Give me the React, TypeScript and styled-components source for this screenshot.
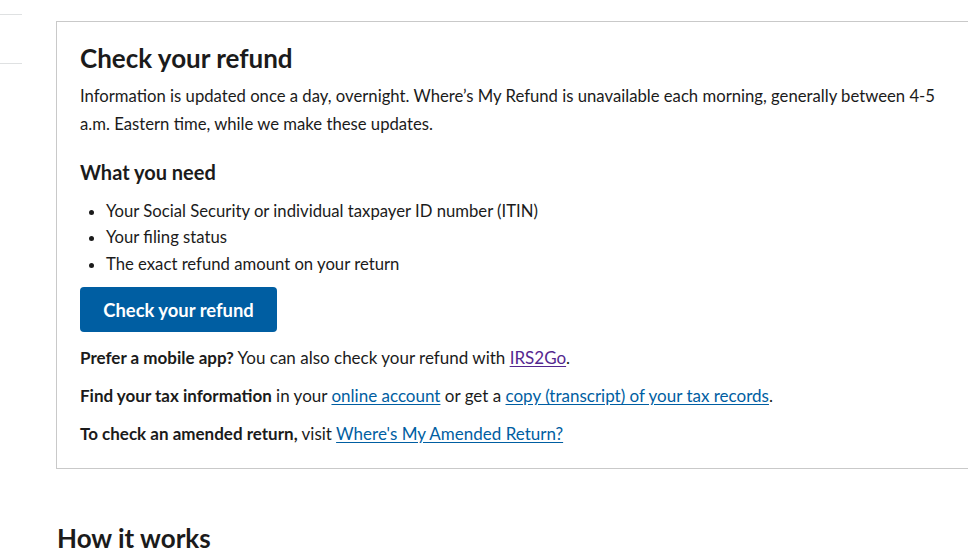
import React from "react";
import styled, { createGlobalStyle } from "styled-components";

const GlobalStyle = createGlobalStyle`
  html, body {
    margin: 0;
    padding: 0;
    background: #fff;
  }
  body {
    font-family: "Lato", "Open Sans", "Liberation Sans", sans-serif;
    color: #1b1b1b;
    overflow: hidden;
  }
`;

const Page = styled.div`
  display: flex;
  gap: 34px;
  width: 1000px;
`;

const SideNav = styled.ul`
  list-style: none;
  margin: 0;
  padding: 14px 0 0;
  width: 22px;
  flex-shrink: 0;
`;

const SideItem = styled.li`
  height: 48px;
  border-top: 1px solid #dfe1e2;
`;

const Main = styled.main`
  flex: 1;
  padding-top: 21px;
`;

const Card = styled.section`
  border: 1px solid #c9c9c9;
  padding: 20px 23px 21px;
`;

const Title = styled.h2`
  font-size: 26px;
  font-weight: 700;
  margin: 0 0 6px;
  line-height: 1.3;
`;

const Text = styled.p`
  font-size: 16.7px;
  line-height: 28px;
  margin: 0;
  max-width: 870px;
`;

const SubTitle = styled.h3`
  font-size: 20px;
  font-weight: 700;
  margin: 21px 0 13px;
  line-height: 1.3;
`;

const List = styled.ul`
  margin: 0;
  padding-left: 26px;
  font-size: 16.7px;
  line-height: 26.5px;
`;

const Button = styled.button`
  display: block;
  margin: 10px 0 13px;
  height: 45px;
  width: 197px;
  background: #005ea2;
  color: #fff;
  border: 0;
  border-radius: 4px;
  font-family: inherit;
  font-size: 18.4px;
  font-weight: 700;
  cursor: pointer;
`;

const Note = styled.p`
  font-size: 17px;
  line-height: 26px;
  margin: 0 0 12px;

  &:last-child {
    margin-bottom: 0;
  }
`;

const Link = styled.a<{ $visited?: boolean }>`
  color: ${(p) => (p.$visited ? "#54278f" : "#005ea2")};
  text-decoration: underline;
  text-underline-offset: 2px;
`;

const Heading = styled.h2`
  font-size: 26px;
  font-weight: 700;
  margin: 53px 0 0 1px;
  line-height: 1.3;
`;

export default function App() {
  return (
    <>
      <GlobalStyle />
      <Page>
        <SideNav>
          <SideItem />
          <SideItem />
        </SideNav>
        <Main>
          <Card>
            <Title>Check your refund</Title>
            <Text>
              Information is updated once a day, overnight. Where’s My Refund is
              unavailable each morning, generally between 4-5 a.m. Eastern time,
              while we make these updates.
            </Text>
            <SubTitle>What you need</SubTitle>
            <List>
              <li>Your Social Security or individual taxpayer ID number (ITIN)</li>
              <li>Your filing status</li>
              <li>The exact refund amount on your return</li>
            </List>
            <Button>Check your refund</Button>
            <Note>
              <strong>Prefer a mobile app?</strong> You can also check your
              refund with <Link href="#" $visited>IRS2Go</Link>.
            </Note>
            <Note>
              <strong>Find your tax information</strong> in your{" "}
              <Link href="#">online account</Link> or get a{" "}
              <Link href="#">copy (transcript) of your tax records</Link>.
            </Note>
            <Note>
              <strong>To check an amended return,</strong> visit{" "}
              <Link href="#">Where's My Amended Return?</Link>
            </Note>
          </Card>
          <Heading>How it works</Heading>
        </Main>
      </Page>
    </>
  );
}
